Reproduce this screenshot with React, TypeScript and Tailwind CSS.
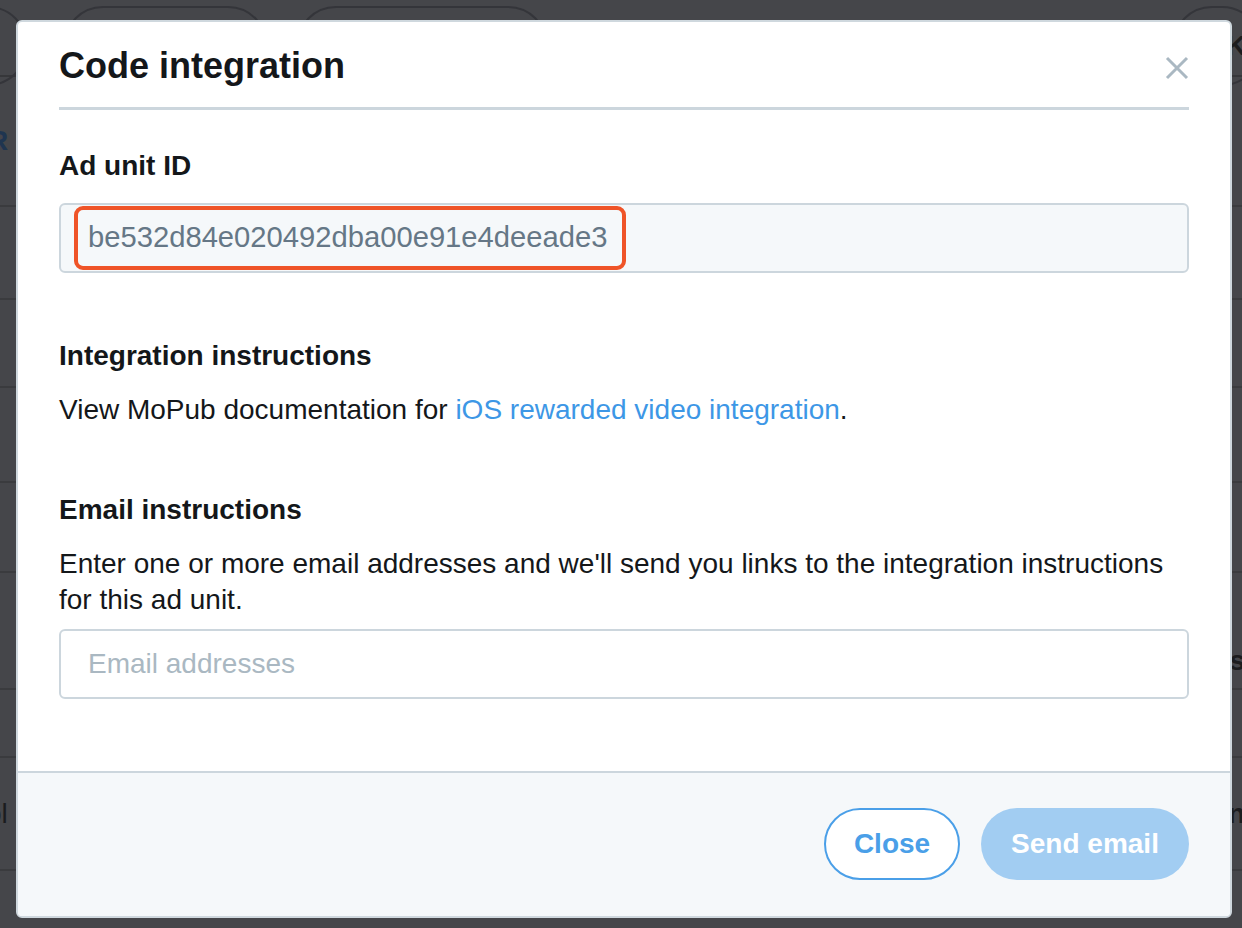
import React from 'react';

const rows = [
  { h: 'h-[93px]', left: '', right: '', align: 'items-center' },
  { h: 'h-[88px]', left: '', right: '', align: 'items-center' },
  { h: 'h-[95px]', left: '', right: '', align: 'items-center' },
  { h: 'h-[90px]', left: '', right: '', align: 'items-center' },
  { h: 'h-[117px]', left: '', right: 's', align: 'items-end pb-[6px]' },
  { h: 'h-[68px]', left: '', right: '', align: 'items-center' },
  { h: 'h-[113px]', left: 'ol', right: 'n', align: 'items-center' },
];

const BackgroundPage: React.FC = () => (
  <div className="w-full">
    <div className="flex items-start h-[77px] border-b-2 border-[#36373a] pt-[6px]">
      <div className="w-[90px] h-[80px] -ml-[62px] rounded-full border-2 border-[#34353a]" />
      <div className="ml-[35px] w-[205px] h-[80px] rounded-full border-2 border-[#34353a]" />
      <div className="ml-[28px] w-[252px] h-[80px] rounded-full border-2 border-[#34353a]" />
      <div className="ml-auto w-[90px] h-[80px] -mr-[20px] rounded-full border-2 border-[#34353a] flex items-center pl-[52px] text-[28px] font-bold text-[#1b1c1e]">
        K
      </div>
    </div>
    <div className="h-[130px] border-b-2 border-[#3a3b3e] flex items-center">
      <span className="-ml-[12px] text-[28px] font-bold text-[#1f3550]">R</span>
    </div>
    {rows.map((r, i) => (
      <div key={i} className={`${r.h} ${r.align} border-b-2 border-[#3a3b3e] flex justify-between text-[28px] text-[#1b1c1e]`}>
        <span className="-ml-[14px]">{r.left}</span>
        <span className="-mr-[3px] font-bold">{r.right}</span>
      </div>
    ))}
  </div>
);

const CloseIcon: React.FC = () => (
  <svg width="24" height="24" viewBox="0 0 24 24" className="shrink-0 mt-[4px]">
    <path d="M2 2 L22 22 M22 2 L2 22" stroke="#aab8c2" strokeWidth="3" strokeLinecap="butt" />
  </svg>
);

const App: React.FC = () => {
  return (
    <div className="relative w-full h-[928px] overflow-hidden bg-[#45464a] font-['Liberation_Sans',Arial,sans-serif]">
      <BackgroundPage />

      {/* modal */}
      <div className="absolute left-[16px] top-[20px] w-[1216px] h-[898px] bg-white rounded-[6px] border-2 border-[#cfd8de] flex flex-col overflow-hidden">
        <div className="px-[41px] pt-[22px]">
          <div className="flex items-center justify-between">
            <h2 className="text-[36px] leading-[44px] font-bold text-[#14171a]">Code integration</h2>
            <CloseIcon />
          </div>
          <div className="mt-[19px] h-[3px] bg-[#ccd6dd]" />
        </div>

        <div className="flex-1 px-[41px]">
          <h3 className="mt-[38px] text-[28px] leading-[36px] font-bold text-[#14171a]">Ad unit ID</h3>
          <div className="mt-[19px] h-[70px] rounded-[6px] border-2 border-[#ccd6dd] bg-[#f5f8fa] flex items-center pl-[13px]">
            <span className="h-[64px] flex items-center pl-[10px] pr-[15px] border-4 border-[#ef5428] rounded-[9px] text-[29.2px] text-[#657786]">
              be532d84e020492dba00e91e4deeade3
            </span>
          </div>

          <h3 className="mt-[65px] text-[28px] leading-[36px] font-bold text-[#14171a]">Integration instructions</h3>
          <p className="mt-[18px] text-[28px] leading-[36px] text-[#14171a]">
            View MoPub documentation for <a className="text-[#3d97e6]">iOS rewarded video integration</a>.
          </p>

          <h3 className="mt-[64px] text-[28px] leading-[36px] font-bold text-[#14171a]">Email instructions</h3>
          <p className="mt-[18px] text-[28px] leading-[36px] text-[#14171a]">
            Enter one or more email addresses and we'll send you links to the integration instructions for this ad unit.
          </p>
          <div className="mt-[11px] h-[70px] rounded-[6px] border-2 border-[#ccd6dd] bg-white flex items-center pl-[27px]">
            <span className="text-[28px] text-[#aab8c2]">Email addresses</span>
          </div>
        </div>

        <div className="h-[145px] border-t-2 border-[#ccd6dd] bg-[#f5f8fa] px-[41px] flex items-center justify-end gap-[21px] pb-[2px]">
          <button className="w-[136px] h-[72px] rounded-full border-2 border-[#4a9fe8] bg-white text-[28px] font-bold text-[#4a9fe8]">
            Close
          </button>
          <button className="w-[208px] h-[72px] rounded-full bg-[#a2cdf2] text-[28px] font-bold text-white">
            Send email
          </button>
        </div>
      </div>
    </div>
  );
};

export default App;
